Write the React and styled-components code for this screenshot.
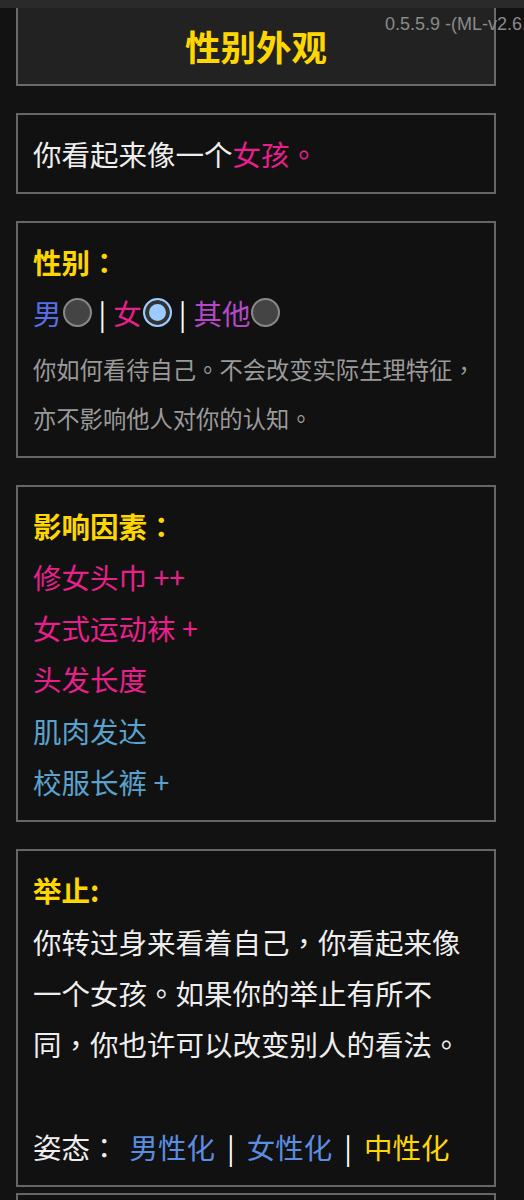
import React from "react";
import styled, { createGlobalStyle } from "styled-components";

const Global = createGlobalStyle`
  html, body {
    margin: 0;
    padding: 0;
    background: #121212;
    overflow-x: hidden;
  }
  body {
    font-family: "Noto Sans CJK SC", "Noto Sans", sans-serif;
    color: #eeeeee;
  }
  * { box-sizing: border-box; }
`;

const Page = styled.div`
  position: relative;
  width: 524px;
  overflow: hidden;
  padding-bottom: 40px;
`;

const TopStrip = styled.div`
  height: 8px;
  background: #2a2a2a;
`;

const Version = styled.div`
  position: absolute;
  top: 14px;
  left: 385px;
  font-family: "Liberation Sans", Arial, sans-serif;
  font-size: 18px;
  color: #8a8a8a;
  white-space: nowrap;
`;

const Column = styled.div`
  width: 480px;
  margin-left: 16px;
  display: flex;
  flex-direction: column;
  gap: 27px;
`;

const TitleBox = styled.div`
  background: #222222;
  border: 2px solid #6a6a6a;
  border-top: none;
  padding: 12px 0;
  text-align: center;
  font-size: 35.5px;
  line-height: 52px;
  font-weight: 700;
  color: #ffd700;
`;

const Box = styled.div`
  background: #111111;
  border: 2px solid #666666;
  padding: 13px 15px;
  font-size: 28.5px;
  line-height: 51.3px;
  color: #eeeeee;
  margin-top: ${(p) => (p.$tight ? "-21px" : "0")};
`;

const Heading = styled.div`
  font-weight: 700;
  color: #ffd700;
`;

const Tone = styled.span`
  color: ${(p) => p.$c};
`;

const Punct = styled.span`
  font-family: "Noto Sans CJK TC", "Noto Sans CJK SC", sans-serif;
`;

const RadioRow = styled.div`
  line-height: 49px;
  display: flex;
  align-items: center;
`;

const Radio = styled.span`
  display: inline-block;
  width: 29px;
  height: 29px;
  border-radius: 50%;
  margin-left: 1px;
  background: ${(p) => (p.$on ? "#9ccbff" : "#444444")};
  border: 2px solid ${(p) => (p.$on ? "#9ccbff" : "#888888")};
  box-shadow: ${(p) => (p.$on ? "inset 0 0 0 4px #333333" : "none")};
`;

const Bar = styled.span`
  color: #ffffff;
  margin: 0 ${(p) => p.$gap || 7}px;
`;

const Desc = styled.div`
  margin-top: 8px;
  font-size: 23.3px;
  line-height: 49px;
  color: #9a9a9a;
`;

const Factor = styled.div`
  color: ${(p) => p.$c};
`;

const Options = styled.span`
  margin-left: 11px;
`;

const Spacer = styled.div`
  height: 51.3px;
`;

const PINK = "#e8208c";
const STEEL = "#5aa2cc";

function T({ children }) {
  const parts = String(children).split(/([。，：])/);
  return (
    <>
      {parts.map((p, i) =>
        /^[。，：]$/.test(p) ? <Punct key={i}>{p}</Punct> : <React.Fragment key={i}>{p}</React.Fragment>
      )}
    </>
  );
}

export default function App() {
  return (
    <Page>
      <Global />
      <TopStrip />
      <Version>0.5.5.9 -(ML-v2.6.0)</Version>
      <Column>
        <TitleBox>性别外观</TitleBox>

        <Box>
          你看起来像一个<Tone $c={PINK}><T>女孩。</T></Tone>
        </Box>

        <Box>
          <Heading><T>性别：</T></Heading>
          <RadioRow>
            <Tone $c="#5470e6">男</Tone>
            <Radio />
            <Bar>|</Bar>
            <Tone $c={PINK}>女</Tone>
            <Radio $on />
            <Bar>|</Bar>
            <Tone $c="#b548c8">其他</Tone>
            <Radio />
          </RadioRow>
          <Desc><T>你如何看待自己。不会改变实际生理特征，亦不影响他人对你的认知。</T></Desc>
        </Box>

        <Box>
          <Heading><T>影响因素：</T></Heading>
          <Factor $c={PINK}>修女头巾 ++</Factor>
          <Factor $c={PINK}>女式运动袜 +</Factor>
          <Factor $c={PINK}>头发长度</Factor>
          <Factor $c={STEEL}>肌肉发达</Factor>
          <Factor $c={STEEL}>校服长裤 +</Factor>
        </Box>

        <Box>
          <Heading>举止:</Heading>
          <div><T>你转过身来看着自己，你看起来像一个女孩。如果你的举止有所不同，你也许可以改变别人的看法。</T></div>
          <Spacer />
          <div>
            <T>姿态：</T>
            <Options>
              <Tone $c="#5b8de0">男性化</Tone>
              <Bar $gap={12}>|</Bar>
              <Tone $c="#5b8de0">女性化</Tone>
              <Bar $gap={12}>|</Bar>
              <Tone $c="#ffd700">中性化</Tone>
            </Options>
          </div>
        </Box>

        <Box $tight>
          <Spacer />
        </Box>
      </Column>
    </Page>
  );
}
